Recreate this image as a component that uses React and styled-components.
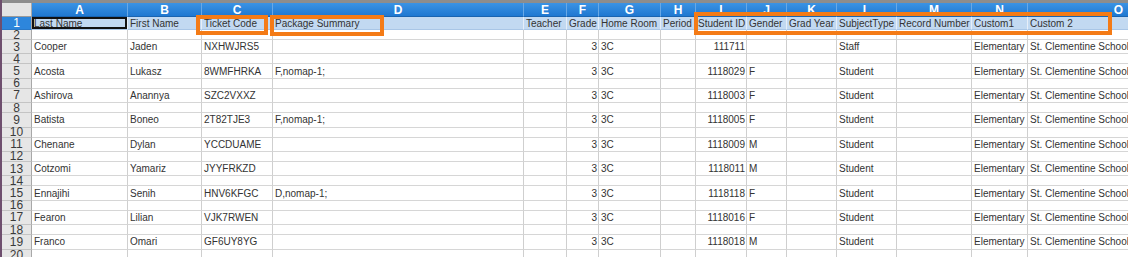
import React from "react";
import styled, { createGlobalStyle } from "styled-components";

const GlobalStyle = createGlobalStyle`
  html, body {
    margin: 0;
    padding: 0;
    background: #fff;
    overflow: hidden;
  }
  body {
    font-family: "Liberation Sans", Arial, sans-serif;
  }
`;

const COLS = [30, 96, 74, 71, 251, 43, 32, 62, 35, 51, 40, 50, 60, 75, 56, 182];
const LETTERS = ["A", "B", "C", "D", "E", "F", "G", "H", "I", "J", "K", "L", "M", "N", "O"];

const HEADINGS = [
  "Last Name", "First Name", "Ticket Code", "Package Summary", "Teacher", "Grade",
  "Home Room", "Period", "Student ID", "Gender", "Grad Year", "SubjectType",
  "Record Number", "Custom1", "Custom 2",
];

const people = [
  ["Cooper", "Jaden", "NXHWJRS5", "", "111711", "", "Staff"],
  ["Acosta", "Lukasz", "8WMFHRKA", "F,nomap-1;", "1118029", "F", "Student"],
  ["Ashirova", "Anannya", "SZC2VXXZ", "", "1118003", "F", "Student"],
  ["Batista", "Boneo", "2T82TJE3", "F,nomap-1;", "1118005", "F", "Student"],
  ["Chenane", "Dylan", "YCCDUAME", "", "1118009", "M", "Student"],
  ["Cotzomi", "Yamariz", "JYYFRKZD", "", "1118011", "M", "Student"],
  ["Ennajihi", "Senih", "HNV6KFGC", "D,nomap-1;", "1118118", "F", "Student"],
  ["Fearon", "Lilian", "VJK7RWEN", "", "1118016", "F", "Student"],
  ["Franco", "Omari", "GF6UY8YG", "", "1118018", "M", "Student"],
];

// right-aligned numeric columns (index into the 15 data columns)
const NUMERIC = new Set([5, 8]);

const Page = styled.div`
  position: relative;
  width: 1128px;
  height: 257px;
  overflow: hidden;
  border-left: 2px solid #6e4f6e;
  box-sizing: border-box;
`;

const TopStrip = styled.div`
  height: 3px;
  background: #8d8d8d;
`;

const Grid = styled.div`
  display: grid;
  grid-template-columns: ${COLS.map((w) => w + "px").join(" ")};
  grid-template-rows: 14px 13px repeat(9, 10px 14.4px) 12px;
  width: max-content;
`;

const Corner = styled.div`
  background: #e4e4e4;
  border-right: 1px solid #a8a8a8;
  border-bottom: 1px solid #9a9a9a;
`;

const ColHead = styled.div`
  background: linear-gradient(#3b93e4, #1f78d1);
  color: #fff;
  font-weight: bold;
  font-size: 12px;
  line-height: 14px;
  text-align: center;
  border-right: 1px solid #68a8e6;
  border-bottom: 1px solid #1a64b0;
  overflow: hidden;
`;

const RowHead = styled.div`
  background: ${(p) => (p.$active ? "#2d86dc" : "#e6e6e6")};
  color: ${(p) => (p.$active ? "#fff" : "#3a3a3a")};
  font-size: 12px;
  line-height: 10px;
  display: flex;
  align-items: center;
  justify-content: center;
  border-right: 1px solid #a8a8a8;
  border-bottom: 1px solid ${(p) => (p.$active ? "#2a78c6" : "#c4c4c4")};
`;

const Cell = styled.div`
  font-size: 10px;
  line-height: 11px;
  color: #333;
  white-space: nowrap;
  overflow: hidden;
  display: flex;
  align-items: center;
  justify-content: ${(p) => (p.$num ? "flex-end" : "flex-start")};
  padding: 0 1px 0 2px;
  box-sizing: border-box;
  background: ${(p) => (p.$selected ? "#c2d9f1" : "#fff")};
  border-right: 1px solid ${(p) => (p.$selected ? "#e6eef8" : "#cfcfcf")};
  border-bottom: 1px solid ${(p) => (p.$selected ? "#a9c6e6" : "#d6d6d6")};
  ${(p) => p.$active && "box-shadow: inset 0 0 0 2px #111;"}
`;

const Highlight = styled.div`
  position: absolute;
  left: ${(p) => p.$x}px;
  top: ${(p) => p.$y}px;
  width: ${(p) => p.$w}px;
  height: ${(p) => p.$h}px;
  border: 4px solid #f47b16;
  box-sizing: border-box;
  pointer-events: none;
`;

function buildRow(person) {
  const [last, first, code, pkg, id, gender, type] = person;
  return [last, first, code, pkg, "", "3", "3C", "", id, gender, "", type, "", "Elementary", "St. Clementine School"];
}

function DataRow({ n, values }) {
  return (
    <>
      <RowHead>{n}</RowHead>
      {LETTERS.map((l, i) => (
        <Cell key={l} $num={NUMERIC.has(i)}>
          {values ? values[i] : ""}
        </Cell>
      ))}
    </>
  );
}

export default function App() {
  const rows = [];
  people.forEach((p, i) => {
    const n = 2 + i * 2;
    rows.push(<DataRow key={n} n={n} />);
    rows.push(<DataRow key={n + 1} n={n + 1} values={buildRow(p)} />);
  });

  return (
    <>
      <GlobalStyle />
      <Page>
        <TopStrip />
        <Grid>
          <Corner />
          {LETTERS.map((l) => (
            <ColHead key={l}>{l}</ColHead>
          ))}

          <RowHead $active>1</RowHead>
          {HEADINGS.map((h, i) => (
            <Cell key={i} $selected $active={i === 0}>
              {h}
            </Cell>
          ))}

          {rows}
          <DataRow n={20} />
        </Grid>

        <Highlight $x={194} $y={15} $w={72} $h={20} />
        <Highlight $x={268} $y={15} $w={114} $h={21} />
        <Highlight $x={692} $y={12} $w={418} $h={23} />
      </Page>
    </>
  );
}
